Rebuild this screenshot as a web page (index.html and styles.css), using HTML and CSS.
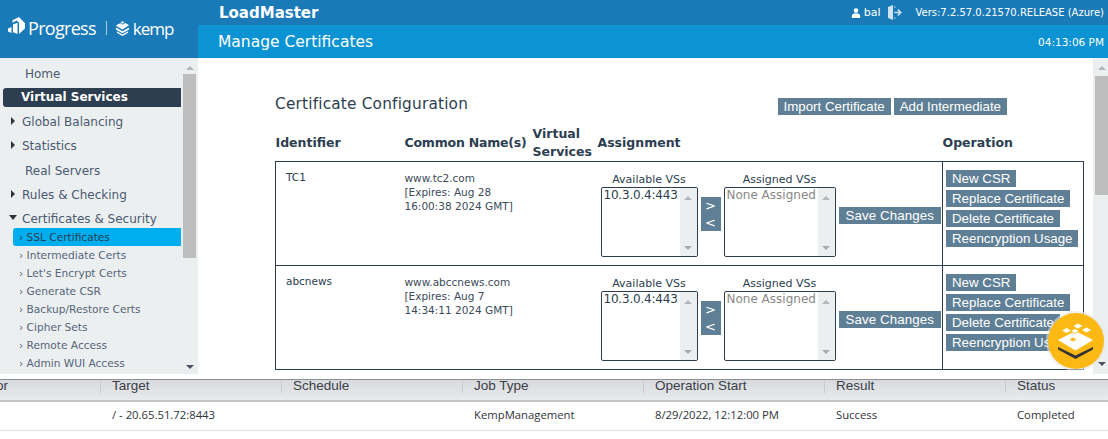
FILE: index.html
```html
<!DOCTYPE html>
<html lang="en">
<head>
<meta charset="utf-8">
<title>LoadMaster</title>
<link rel="stylesheet" href="styles.css">
</head>
<body>
<div class="app">
  <header class="top">
    <div class="brand">
      <svg class="logo-mark" viewBox="0 0 17 17" width="17" height="17"><path d="M4.500 3.200L11 0l6 6.200v5.300L11 17V5.800L8.800 3.600 4.500 5.700z" fill="#fff"/><path d="M5 7.500l4.500-1.700V17L5 15.200z" fill="#fff"/><path d="M0 11.500l3.500-1.600v6L0 14.500z" fill="#fff"/></svg>
      <span class="brand-name">Progress</span>
      <span class="brand-sep"></span>
      <svg class="kemp-mark" viewBox="0 0 16 16" width="15" height="15"><path d="M8 0l2 1.500L8 3 6 1.500zM3 3.500l3-1 2 1.500 3-2 1.500 1L15 4.500 8 9 1 5z" fill="#fff"/><path d="M1 7l7 4 7-4v2l-7 4-7-4zM2 11l6 3.500 6-3.500v1.500L8 16l-6-3.500z" fill="#fff"/></svg>
      <span class="kemp-name">kemp</span>
    </div>
    <div class="top-main">
      <div class="top-row">
        <span class="product">LoadMaster</span>
        <div class="user">
          <svg viewBox="0 0 10 10" width="10" height="10"><circle cx="5" cy="2.600" r="2.300" fill="#fff"/><path d="M.8 10V8c0-1.700 1.500-2.800 4.200-2.800S9.200 6.300 9.200 8v2z" fill="#fff"/></svg>
          <span class="user-name">bal</span>
          <svg class="logout" viewBox="0 0 15 15" width="15" height="15"><path d="M1 2l5-2v15l-5-2z" fill="#cfe4f3"/><path d="M7 2h1.500M7 13h1.500" stroke="#cfe4f3" stroke-width="1.200"/><path d="M7.500 7.500h6M10.800 4.500l3 3-3 3" fill="none" stroke="#cfe4f3" stroke-width="1.500"/></svg>
          <span class="version">Vers:7.2.57.0.21570.RELEASE (Azure)</span>
        </div>
      </div>
      <div class="sub-row">
        <span class="page-title">Manage Certificates</span>
        <span class="clock">04:13:06 PM</span>
      </div>
    </div>
  </header>
  <div class="body-row">
    <nav class="side">
      <ul class="menu">
        <li class="item plain">Home</li>
        <li class="item active">Virtual Services</li>
        <li class="item"><i class="tri"></i>Global Balancing</li>
        <li class="item"><i class="tri"></i>Statistics</li>
        <li class="item plain servers">Real Servers</li>
        <li class="item"><i class="tri"></i>Rules &amp; Checking</li>
        <li class="item"><i class="tri open"></i>Certificates &amp; Security</li>
        <li class="sub current">› SSL Certificates</li>
        <li class="sub">› Intermediate Certs</li>
        <li class="sub">› Let's Encrypt Certs</li>
        <li class="sub">› Generate CSR</li>
        <li class="sub">› Backup/Restore Certs</li>
        <li class="sub">› Cipher Sets</li>
        <li class="sub">› Remote Access</li>
        <li class="sub">› Admin WUI Access</li>
      </ul>
      <div class="bar side-bar">
        <i class="arrow up"></i>
        <div class="thumb side-thumb"></div>
        <i class="arrow down"></i>
      </div>
    </nav>
    <main class="content">
      <div class="title-row">
        <h1 class="title">Certificate Configuration</h1>
        <div class="title-btns"><a class="btn">Import Certificate</a><a class="btn">Add Intermediate</a></div>
      </div>
      <table class="certs">
        <colgroup><col class="c1"><col class="c2"><col class="c3"><col class="c4"><col class="c5"></colgroup>
        <thead>
          <tr><th>Identifier</th><th class="nowrap">Common Name(s)</th><th>Virtual Services</th><th>Assignment</th><th>Operation</th></tr>
        </thead>
        <tbody>
          <tr>
            <td class="id">TC1</td>
            <td class="cn" colspan="2">www.tc2.com<br>[Expires: Aug 28<br>16:00:38 2024 GMT]</td>
            <td class="assign">
              <div class="assign-in">
                <div class="vs"><span class="vs-label">Available VSs</span><div class="listbox avail"><span class="opt">10.3.0.4:443</span><div class="lb-bar"><i class="arrow up"></i><i class="arrow down"></i></div></div></div>
                <div class="move"><span>&gt;</span><span>&lt;</span></div>
                <div class="vs"><span class="vs-label">Assigned VSs</span><div class="listbox assigned"><span class="opt none">None Assigned</span><div class="lb-bar"><i class="arrow up"></i><i class="arrow down"></i></div></div></div>
                <a class="btn save">Save Changes</a>
              </div>
            </td>
            <td class="ops"><a class="btn">New CSR</a><a class="btn">Replace Certificate</a><a class="btn">Delete Certificate</a><a class="btn">Reencryption Usage</a></td>
          </tr>
          <tr>
            <td class="id">abcnews</td>
            <td class="cn" colspan="2">www.abccnews.com<br>[Expires: Aug 7<br>14:34:11 2024 GMT]</td>
            <td class="assign">
              <div class="assign-in">
                <div class="vs"><span class="vs-label">Available VSs</span><div class="listbox avail"><span class="opt">10.3.0.4:443</span><div class="lb-bar"><i class="arrow up"></i><i class="arrow down"></i></div></div></div>
                <div class="move"><span>&gt;</span><span>&lt;</span></div>
                <div class="vs"><span class="vs-label">Assigned VSs</span><div class="listbox assigned"><span class="opt none">None Assigned</span><div class="lb-bar"><i class="arrow up"></i><i class="arrow down"></i></div></div></div>
                <a class="btn save">Save Changes</a>
              </div>
            </td>
            <td class="ops"><a class="btn">New CSR</a><a class="btn">Replace Certificate</a><a class="btn">Delete Certificate</a><a class="btn">Reencryption Usage</a></td>
          </tr>
        </tbody>
      </table>
    </main>
    <div class="bar main-bar">
      <i class="arrow up"></i>
      <div class="thumb main-thumb"></div>
      <i class="arrow down"></i>
    </div>
  </div>
</div>
<section class="jobs">
  <div class="jobs-head">
    <span class="jc first">Operator</span><span class="jc">Target</span><span class="jc">Schedule</span><span class="jc">Job Type</span><span class="jc">Operation Start</span><span class="jc">Result</span><span class="jc">Status</span>
  </div>
  <div class="jobs-row">
    <span class="jc first"></span><span class="jc">/ - 20.65.51.72:8443</span><span class="jc"></span><span class="jc">KempManagement</span><span class="jc">8/29/2022, 12:12:00 PM</span><span class="jc">Success</span><span class="jc">Completed</span>
  </div>
</section>
<div class="badge">
  <svg viewBox="0 0 56 56" width="56" height="56">
    <path d="M27.500 18L45 27 27.500 37.500 10 27z" fill="#fff"/>
    <path d="M30 10.500l4.500 2.500-4.500 2.500-4.500-2.500zM38.500 14.500l4.500 2.500-4.500 2.500-4.500-2.500zM18.500 15l4.500 2.500-4.500 2.500-4.500-2.500z" fill="#fff"/>
    <path d="M27 15.500l4.500 2.500-4.500 2.500-4.500-2.500z" fill="#fff" stroke="#fdb913" stroke-width=".8"/>
    <path d="M25 24.500l3.500 2-3.500 2-3.500-2z" fill="#fdb913"/>
    <path d="M10 34l17.500 8.500L45 34v2.500L27.500 46 10 36.500z" fill="#333"/>
  </svg>
</div>
</body>
</html>
```

FILE: styles.css
```css
* { box-sizing: border-box; }
html, body { margin: 0; padding: 0; }
body {
  width: 1108px;
  height: 439px;
  overflow: hidden;
  position: relative;
  background: #fff;
  font-family: "DejaVu Sans", sans-serif;
  color: #2c3e50;
}
.app { height: 374px; display: flex; flex-direction: column; overflow: hidden; }

/* header */
.top { display: flex; height: 58px; flex: none; background: #1a7ab8; }
.brand { width: 198px; flex: none; display: flex; align-items: center; color: #fff; padding: 0 0 2px 8px; height: 58px; }
.logo-mark { margin: 0 3px 5px 0; }
.brand-name { font: 18px "Open Sans", sans-serif; letter-spacing: -.7px; }
.brand-sep { width: 1px; height: 14px; background: #a8cde6; margin: 0 8px 0 10px; }
.kemp-mark { margin-right: 3px; }
.kemp-name { font: 17px "Open Sans", sans-serif; letter-spacing: -1px; }
.top-main { flex: 1; display: flex; flex-direction: column; color: #fff; }
.top-row { height: 25px; display: flex; align-items: center; justify-content: space-between; padding: 0 4px 0 21px; }
.product { font-size: 15px; font-weight: 700; }
.user { display: flex; align-items: center; font-size: 10px; }
.user-name { margin-left: 3px; font-size: 11px; }
.logout { margin: 0 13px 0 7px; }
.version { font-size: 10px; }
.sub-row { height: 33px; background: #0b93d3; display: flex; align-items: center; justify-content: space-between; padding: 0 4px 0 20px; }
.page-title { font-size: 15.500px; }
.clock { font-size: 10.500px; }

/* sidebar */
.body-row { flex: 1; display: flex; min-height: 0; }
.side { width: 198px; flex: none; background: #eceff0; display: flex; overflow: hidden; }
.menu { list-style: none; margin: 0; padding: 4px 0 0 0; flex: 1; min-width: 0; }
.item { height: 24px; line-height: 24px; font-size: 12px; color: #4a5a70; padding-left: 22px; white-space: nowrap; position: relative; }
.item.plain { padding-left: 25px; }
.item.servers { margin-top: 1px; }
.item.active { height: 19px; line-height: 19px; margin: 2px 2px 3px 3px; padding-left: 18px; background: #2c3e50; color: #fff; font-weight: 700; font-size: 12px; border-radius: 3px 0 0 3px; }
.tri { position: absolute; left: 11px; top: 7px; border-left: 4px solid #333; border-top: 4px solid transparent; border-bottom: 4px solid transparent; }
.tri.open { left: 9px; top: 8px; border-top: 5px solid #333; border-left: 4px solid transparent; border-right: 4px solid transparent; border-bottom: 0; }
.sub { height: 18px; line-height: 18px; font-size: 10.600px; color: #55657a; padding-left: 19px; white-space: nowrap; }
.sub.current { margin: -3px 2px 0 13px; padding-left: 6px; background: #00aeef; color: #2c3e50; border-radius: 3px 0 0 3px; }

/* scrollbars */
.bar { display: flex; flex-direction: column; align-items: center; flex: none; }
.side-bar { width: 13px; margin-right: 2px; padding-top: 8px; }
.side-thumb { height: 184px; width: 13px; margin-top: 4px; }
.main-bar { width: 15px; background: #eceff0; align-items: flex-end; padding: 8px 0 0 0; }
.main-thumb { width: 13px; height: 119px; margin-top: 6px; }
.thumb { background: #bdbdbd; flex: none; }
.arrow { display: block; width: 0; height: 0; border-left: 4px solid transparent; border-right: 4px solid transparent; flex: none; }
.arrow.up { border-bottom: 4px solid #b5b5b5; }
.arrow.down { border-top: 4px solid #505060; margin-top: auto; margin-bottom: 5px; }
.main-bar .arrow { margin-right: 2px; }
.main-bar .arrow.down { margin-bottom: 8px; }

/* content */
.content { flex: 1; min-width: 0; overflow: hidden; padding: 0 0 0 77px; }
.title-row { display: flex; height: 67px; align-items: flex-start; justify-content: space-between; padding-right: 86px; }
.title { margin: 37px 0 0 0; font-size: 15.300px; font-weight: 400; letter-spacing: .2px; color: #2c3e50; }
.title-btns { display: flex; gap: 3px; margin: 40px 0 0 0; }
.btn { display: block; background: #5f7f96; color: #fff; font: 13.300px/17px "Liberation Sans", sans-serif; padding: 0 6px; white-space: nowrap; }
.certs { width: 808px; table-layout: fixed; border-collapse: collapse; font-size: 10.500px; }
.c1 { width: 129px; } .c2 { width: 128px; } .c3 { width: 65px; } .c4 { width: 345px; } .c5 { width: 141px; }
.certs th { height: 36px; padding: 0; text-align: left; vertical-align: middle; font-size: 12.500px; font-weight: 700; line-height: 18px; color: #2c3e50; }
.certs th.nowrap { white-space: nowrap; letter-spacing: -.2px; }
.certs td { border: 1px solid #2c3e50; vertical-align: top; padding: 0; height: 104px; }
.id { padding: 9px 0 0 10px !important; }
.certs .id, .certs .cn { border-width: 1px 0; }
.certs .id { border-left-width: 1px; }
.cn { line-height: 14px; padding-top: 9px !important; color: #3c4a5a; }
.certs .assign { border-width: 1px 0; }
.assign-in { display: flex; align-items: flex-start; padding: 10px 0 0 3px; }
.vs { display: flex; flex-direction: column; align-items: center; flex: none; }
.vs-label { font-size: 11px; line-height: 16px; margin-bottom: -1px; }
.listbox { display: flex; justify-content: space-between; height: 70px; border: 1px solid #2c3e50; border-radius: 2px; background: #fff; overflow: hidden; }
.avail { width: 97px; }
.assigned { width: 112px; }
.opt { padding-left: 2px; letter-spacing: -.2px; white-space: nowrap; font-size: 12px; line-height: 15px; }
.opt.none { color: #888; letter-spacing: 0; }
.lb-bar { width: 17px; flex: none; background: #eceff0; display: flex; flex-direction: column; align-items: center; padding-top: 8px; }
.lb-bar .arrow.down { margin-bottom: 6px; border-top-color: #aaa; }
.move { width: 20px; height: 34px; flex: none; margin: 25px 3px 0 3px; background: #5f7f96; color: #fff; display: flex; flex-direction: column; align-items: center; font-size: 13px; line-height: 17px; }
.save { margin: 35px 0 0 3px; padding: 0 7px; letter-spacing: .1px; flex: none; }
.ops { padding: 8px 0 0 3px !important; }
.ops .btn { width: max-content; margin-bottom: 3px; }

/* jobs */
.jobs { margin-top: 5px; border-top: 1px solid #8b8f93; font-family: "Open Sans", sans-serif; }
.jobs-head, .jobs-row { display: grid; grid-template-columns: 100px repeat(5, 181px) 1fr; }
.jobs-head { height: 22px; background: linear-gradient(#d8dadd, #e9eaec); border-bottom: 2px solid #c4c6c9; font: 13.500px "Liberation Sans", sans-serif; color: #3a4048; align-items: start; }
.jobs-row { height: 29px; border-bottom: 1px solid #dfe0e2; font-size: 11.300px; color: #30343a; align-items: center; padding-bottom: 3px; }
.jc { padding-left: 12px; white-space: nowrap; overflow: hidden; }
.jobs-head .jc { height: 13px; line-height: 11px; border-left: 1px solid #c9cbce; padding-left: 11px; overflow: visible; }
.jobs-head .jc.first { border-left: 0; display: flex; justify-content: flex-end; padding: 0 92px 0 0; }

/* floating badge */
.badge { position: absolute; left: 1048px; top: 313px; width: 56px; height: 56px; border-radius: 50%; background: #fdb913; box-shadow: 0 0 0 2px rgba(230,230,230,.6); }
```
